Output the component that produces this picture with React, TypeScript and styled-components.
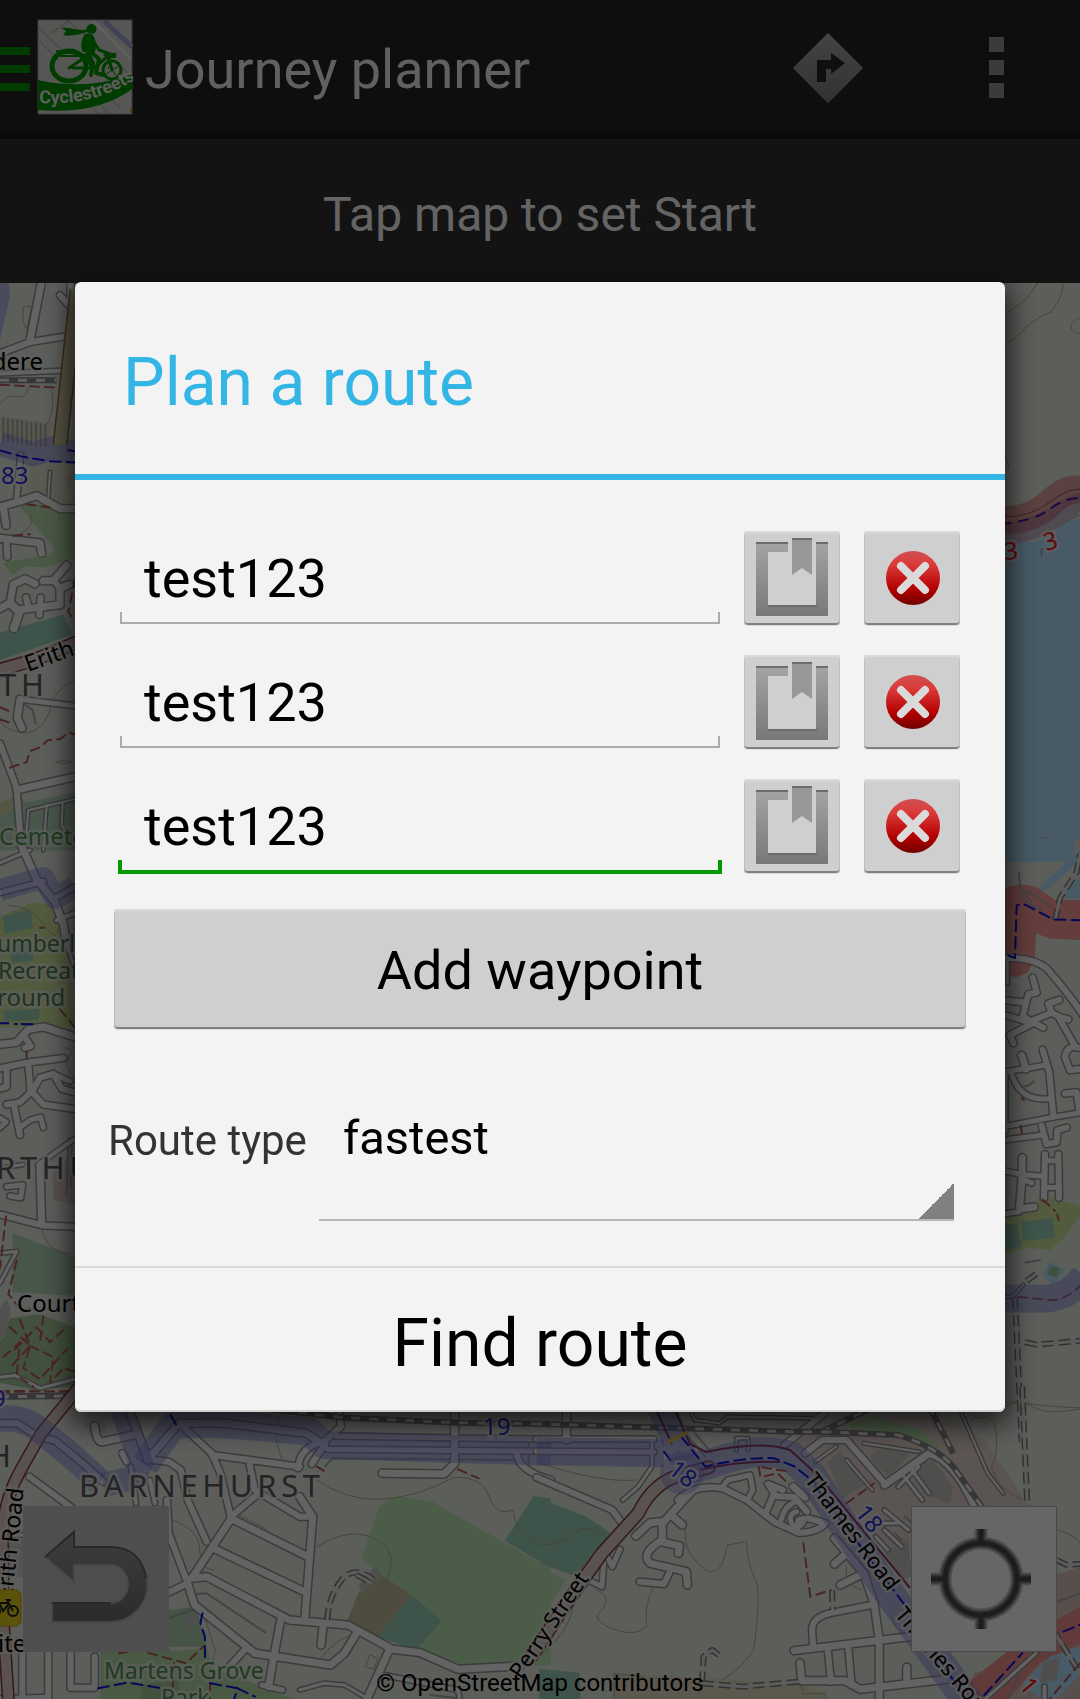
import React from "react";
import styled, { createGlobalStyle, css } from "styled-components";

const GlobalStyle = createGlobalStyle`
  *, *::before, *::after { box-sizing: border-box; }
  body {
    margin: 0;
    font-family: Roboto, "Noto Sans", sans-serif;
    background: #232323;
  }
  button, input, select { font: inherit; color: inherit; }
  h1, h2, p { margin: 0; font-weight: 400; }
`;

/* ---------- page ---------- */

const Page = styled.div`
  display: flex;
  flex-direction: column;
  min-height: 100vh;
`;

const ActionBar = styled.header`
  display: flex;
  align-items: center;
  height: 139px;
  background: #232323;
  border-bottom: 6px solid #1a1a1a;
  color: #f0f0f0;
`;

const BareButton = styled.button`
  display: flex;
  align-items: center;
  justify-content: center;
  padding: 0;
  border: 0;
  background: none;
`;

const DrawerButton = styled(BareButton)`
  flex-direction: column;
  align-items: stretch;
  gap: 10px;
  width: 30px;
  margin: 4px 7px 0 0;
`;

const DrawerLine = styled.span`
  height: 8px;
  background: #009600;
`;

const AppTitle = styled.h1`
  flex: 1;
  padding: 6px 0 0 12px;
  font-size: 54px;
  line-height: 64px;
  white-space: nowrap;
`;

const ActionButton = styled(BareButton)`
  width: 168px;
  height: 133px;
  padding-top: 2px;
`;

const Dots = styled.span`
  display: grid;
  gap: 8px;
`;

const Dot = styled.span`
  width: 15px;
  height: 15px;
  background: #939393;
`;

const Hint = styled.p`
  height: 144px;
  padding-top: 7px;
  background: #313131;
  color: #fbfbfb;
  font-size: 48px;
  line-height: 137px;
  text-align: center;
`;

/* ---------- map ---------- */

const MapPane = styled.main`
  position: relative;
  flex: 1;
  min-height: 600px;
  overflow: hidden;
  background: #e6eae2;
`;

const MapCanvas = styled.svg`
  position: absolute;
  inset: 0;
  width: 100%;
  height: 100%;
`;

const MapControls = styled.div`
  position: absolute;
  inset: auto 23px 47px;
  display: flex;
  justify-content: space-between;
`;

const MapButton = styled(BareButton)<{ $light?: boolean }>`
  width: 146px;
  height: 146px;
  background: ${(p) => (p.$light ? "#ffffff" : "#c3c3c3")};
  ${(p) => p.$light && css`box-shadow: inset 0 0 0 1px #b4b4b4;`}
`;

const Attribution = styled.p`
  position: absolute;
  inset: auto 0 0;
  color: #000;
  font-size: 24px;
  line-height: 32px;
  text-align: center;
`;

/* ---------- dialog ---------- */

const Scrim = styled.div`
  position: fixed;
  inset: 0;
  display: flex;
  align-items: center;
  justify-content: center;
  padding: 0 75px 6px;
  background: rgba(0, 0, 0, 0.6);
`;

const Dialog = styled.section`
  flex: 1;
  max-width: 1200px;
  border-radius: 6px;
  background: #f3f3f3;
  box-shadow: 0 8px 28px 4px rgba(0, 0, 0, 0.75), inset 0 -2px 0 #d0d0d0;
  color: #000;
`;

const DialogTitle = styled.h2`
  height: 198px;
  padding: 8px 48px 0;
  border-bottom: 6px solid #33b5e5;
  color: #33b5e5;
  font-size: 66px;
  line-height: 186px;
`;

const DialogBody = styled.div`
  padding: 50px 39px 45px;
`;

const Waypoints = styled.div`
  display: grid;
  gap: 28px;
  padding: 0 6px 0 4px;
`;

const Waypoint = styled.div`
  display: grid;
  grid-template-columns: 1fr 96px 96px;
  align-items: center;
  gap: 24px;
`;

const WaypointInput = styled.input<{ $active: boolean }>`
  --line: ${(p) => (p.$active ? "#009900" : "#ababab")};
  --weight: ${(p) => (p.$active ? "4px" : "2px")};
  --rise: ${(p) => (p.$active ? "14px" : "12px")};
  width: calc(100% + 2px);
  height: 96px;
  padding: ${(p) => (p.$active ? "2px 26px 0" : "4px 24px 0")};
  border: ${(p) => (p.$active ? "0" : "2px")} solid transparent;
  border-top-width: 0;
  border-radius: 0;
  outline: 0;
  background-color: transparent;
  background-image: linear-gradient(var(--line), var(--line)),
    linear-gradient(var(--line), var(--line)),
    linear-gradient(var(--line), var(--line));
  background-position: left bottom, right bottom, left bottom;
  background-size: var(--weight) var(--rise), var(--weight) var(--rise), 100% var(--weight);
  background-repeat: no-repeat;
  font-size: 54px;
`;

const greyButton = css`
  border: 0;
  border-radius: 4px;
  background: #cfcfcf;
  box-shadow: inset 0 2px 0 #dadada, inset 1px 0 0 #bcbcbc, inset -1px 0 0 #bcbcbc,
    inset 0 -2px 0 #808080, 0 1px 0 #dcdcdc;
`;

const WaypointButton = styled(BareButton)`
  ${greyButton}
  height: 94px;
`;

const AddButton = styled.button`
  ${greyButton}
  width: 100%;
  height: 120px;
  margin-top: 35px;
  padding: 4px 0 0;
  font-size: 54px;
`;

const RouteType = styled.div`
  display: flex;
  align-items: center;
  gap: 12px;
  margin: 28px 12px 0 -6px;
`;

const RouteLabel = styled.label`
  padding-top: 3px;
  color: #333;
  font-size: 42px;
  white-space: nowrap;
`;

const RouteSelect = styled.select`
  flex: 1;
  min-width: 0;
  height: 164px;
  padding: 0 24px;
  border: 0;
  border-bottom: 2px solid #b7b7b7;
  border-radius: 0;
  appearance: none;
  background: linear-gradient(135deg, transparent 50%, #808080 50%) right bottom / 36px 36px no-repeat;
  font-size: 47px;
`;

const FindButton = styled.button`
  display: block;
  width: 100%;
  height: 146px;
  padding: 8px 0 0;
  border: 0;
  border-top: 2px solid #d9d9d9;
  background: none;
  font-size: 66px;
`;

/* ---------- map drawing ---------- */

type Area = [fill: string, points: string];
type Line = [d: string, width: number];

interface Sheet {
  transform: string;
  areas: Area[];
  bands: Line[];
  rails: string[];
  roads: Line[];
  lanes: string[];
  mains: Line[];
  tracks: string[];
  cycle: string[];
  paths: string[];
  contours: string[];
}

const PARK = "#b9dfaa";
const PITCH = "#9bd0b8";
const GRASS = "#cfe39c";
const WOOD = "#a6cb98";
const WATER = "#b2e1ff";

const sheets: Sheet[] = [
  {
    transform: "translate(0 270) scale(.3333 .37)",
    areas: [
      ["#bcbcf0", "0,30 25,30 30,70 0,190"],
      ["#dedcc2", "0,395 155,415 145,480 0,455"],
      ["#e2e0cc", "80,520 225,520 225,640 80,600"],
      [PARK, "60,640 100,630 225,660 225,780 165,755"],
      [PARK, "10,790 150,770 165,755 225,780 130,805 75,800 35,825"],
      [PITCH, "0,980 190,932 218,985 0,1055"],
      ["#d6d6ac", "0,1440 60,1410 75,1440 0,1480"],
      ["#b4d6be", "0,1480 75,1440 225,1410 225,1568 0,1568"],
      ["#cacaca", "205,555 215,555 210,590 198,585"],
    ],
    bands: [["M0 470L100 498 170 478 225 498", 24]],
    rails: ["M0 298L170 298"],
    roads: [
      ["M125 30L90 190", 8], ["M0 225L90 195 205 178", 7], ["M212 30L212 100 180 68", 7],
      ["M0 280L185 272", 5], ["M62 500L50 620", 6], ["M0 640L60 625 110 610 180 645 225 645", 8],
      ["M10 640L18 690", 8], ["M0 725L120 738 125 765", 8], ["M20 740L22 775", 7],
      ["M0 915L30 900 40 850 75 835 105 848", 8], ["M30 900L58 925 42 968", 9],
      ["M58 918L180 905 180 860 208 850", 8], ["M78 885L85 910", 7], ["M122 885L118 932", 7],
      ["M130 840L160 840 200 798", 8], ["M160 838L182 862", 7], ["M60 1160L225 1178", 6],
      ["M60 1160L52 1210 66 1238", 8], ["M0 1280L50 1400 60 1520", 7], ["M50 1405L225 1370", 8],
      ["M75 1568L85 1460 225 1430", 3], ["M140 1445L130 1568", 3], ["M188 1440L185 1500 210 1540", 3],
      ["M150 545L145 615", 3],
    ],
    lanes: [
      "M10 400v60M24 402v60M38 404v60M52 406v60M66 408v60M80 410v60M94 412v60M108 414v60M122 416v60M136 418v56",
      "M70 1172L98 1190 107 1225",
    ],
    mains: [["M0 1080L100 1055 225 1008", 14]],
    tracks: [],
    cycle: ["M0 488L70 505 150 517 225 520", "M205 487L225 490"],
    paths: [
      "M0 310L175 318", "M30 1345L80 1330 90 1300 120 1290 145 1270 180 1268 205 1250 225 1255",
      "M0 1182L35 1195", "M0 1215L35 1225", "M225 835L205 925 222 945", "M40 718L90 714", "M80 633L150 642",
    ],
    contours: [
      "M70 100L95 98 80 160 70 140Z", "M0 362Q20 335 50 342T85 318", "M155 325Q170 390 130 430",
      "M225 1110Q160 1130 150 1190Q120 1260 60 1250T0 1210", "M168 1330q20-8 45 0q-20 10-45 0",
      "M0 740Q120 700 90 660",
    ],
  },
  {
    transform: "translate(0 850) scale(.3333 .37)",
    areas: [
      [GRASS, "0,180 100,140 165,150 215,330 225,480 0,480"],
      [PITCH, "8,180 92,160 98,210 15,228"],
      [PITCH, "30,262 100,250 100,300 35,305"],
      [PITCH, "12,435 120,430 115,460 12,462"],
      ["#dcc8c4", "160,860 225,820 225,960 160,945"],
      ["#b4d4b6", "38,1035 225,1100 225,1205 38,1195"],
      [WOOD, "30,1265 120,1255 225,1290 225,1450 110,1460 0,1440 0,1330"],
      ["#c8c8c8", "0,1240 20,1215 32,1240 15,1320 0,1320"],
    ],
    bands: [["M0 108L130 75 165 130 225 100", 22]],
    rails: ["M0 1477L225 1473"],
    roads: [
      ["M65 -10L110 80 165 140 190 200 200 250", 8], ["M0 115L130 85", 6], ["M165 130L225 100", 6],
      ["M0 35L90 0", 4], ["M0 525L50 520 85 485 130 478 225 505", 8], ["M70 500L92 530 75 535", 7],
      ["M0 590L80 575 190 562", 7], ["M20 588L20 640 0 645", 7], ["M85 580L92 655 60 682 20 688", 7],
      ["M42 690L60 770", 7], ["M60 750L90 730 122 722 130 750", 6], ["M92 650L130 688 225 700", 7],
      ["M95 655L120 615 160 605 185 645 225 655", 7], ["M160 605L210 625", 6], ["M0 725L18 735 0 750", 6],
      ["M225 780L115 850", 5], ["M120 855L125 1010", 8], ["M0 985L130 1015 225 1018", 7],
      ["M20 910L68 905 62 940 30 935", 6], ["M70 850L0 860", 4], ["M0 1090L50 1085 0 1170", 4],
      ["M0 1425L45 1420 120 1455 225 1430", 4], ["M170 190L225 170", 5], ["M190 230L225 320", 4],
    ],
    lanes: ["M205 780L200 930", "M215 790L212 910"],
    mains: [],
    tracks: [],
    cycle: ["M0 468h25", "M45 470h6", "M65 470L102 471"],
    paths: [
      "M18 990L0 1130", "M50 1110L25 1200 60 1240 225 1240",
      "M30 1290L90 1340 70 1400 120 1430 200 1350", "M45 1350L110 1290 150 1330 200 1290",
      "M10 1370L60 1330 50 1420 100 1450", "M90 1340L160 1370 150 1440 190 1400 225 1410",
      "M130 1260L120 1330", "M180 430L225 480", "M80 545v20", "M120 210h12",
      "M0 1465L225 1462", "M60 1270L90 1340 30 1400",
    ],
    contours: ["M125 1020Q140 1095 225 1090", "M25 150Q90 150 130 200T175 215", "M195 535L215 540 200 580 225 620"],
  },
  {
    transform: "translate(960 270) scale(.3333 .37)",
    areas: [
      [WATER, "100,738 225,735 280,712 320,680 360,672 360,1600 100,1600"],
      ["#e0e0dc", "342,1550 360,1530 360,1600 342,1590"],
    ],
    bands: [],
    rails: [],
    roads: [],
    lanes: ["M245 755v15"],
    mains: [],
    tracks: [],
    cycle: [],
    paths: [],
    contours: [
      "M232 35Q200 90 135 118", "M310 35Q310 70 275 112Q220 130 170 180L135 202",
      "M360 130Q335 135 332 155Q345 175 360 172", "M135 500L146 530 135 540", "M220 1568L215 1545 268 1532",
    ],
  },
  {
    transform: "translate(960 850) scale(.3333 .37)",
    areas: [
      [WATER, "100,-30 310,-30 320,15 240,25 100,8"],
      [WATER, "360,0 310,40 240,100 240,118 285,90 340,45 360,20"],
      [WATER, "315,110 360,75 360,132 320,132"],
      ["#fa9b96", "120,105 180,92 230,100 285,135 360,135 360,243 270,240 228,225 225,290 205,330 170,344 120,335"],
      [GRASS, "120,1005 230,960 235,935 300,945 360,962 360,990 310,1050 270,1082 200,1075 120,1105"],
      [PITCH, "183,1005 278,995 285,1048 190,1057"],
      [PITCH, "120,1018 170,1008 185,1070 120,1088"],
      [WATER, "268,1112 315,1135 280,1175 248,1150"],
      ["#9ccb9a", "270,1125 300,1130 290,1155 262,1148"],
      ["#e4cfcc", "120,870 150,870 145,975 120,975"],
    ],
    bands: [["M100 1212L250 1213Q330 1210 375 1150", 28]],
    rails: [],
    roads: [
      ["M140 292Q220 290 260 320Q330 390 375 455", 7], ["M218 345L230 385 205 390 188 450 250 480", 7],
      ["M120 405L195 412", 7], ["M120 442L195 462", 7], ["M215 470L150 500 160 522", 7],
      ["M220 460L275 440 265 415 298 405", 7], ["M275 440L300 452 325 458", 7], ["M298 455L345 530", 7],
      ["M360 535Q320 525 315 560L330 595 375 590", 7], ["M185 555L198 592", 8], ["M120 602L255 582", 6],
      ["M248 540L268 600 280 720", 7], ["M155 605Q180 680 265 672", 6], ["M120 750L280 722 375 708", 6],
      ["M315 658L350 655 358 705", 7], ["M120 785L250 770", 6], ["M245 745L260 795 290 790 292 758 320 750", 7],
      ["M187 832L185 900 178 970 222 965", 8], ["M120 865L190 878 250 882", 6], ["M190 890L215 900", 6],
      ["M255 822L252 940", 7], ["M295 822L297 940", 7], ["M255 840h40", 6], ["M255 912h42", 6],
      ["M120 985L178 978", 6], ["M138 600V760", 4], ["M120 1210L160 1205 190 1175", 3],
      ["M142 290V360", 4],
    ],
    lanes: [
      "M177 60L180 105 215 140", "M190 110Q230 120 265 150M185 125Q220 160 245 160", "M185 640Q205 640 222 625",
      "M197 1115L240 1108",
    ],
    mains: [],
    tracks: ["M165 1210L185 1600", "M195 1330L230 1337 375 1325", "M285 190L300 130 350 60 360 10", "M200 1165L230 1145"],
    cycle: ["M145 285L165 292 170 150 190 145 280 188 375 190"],
    paths: ["M175 1208L280 1217Q330 1210 375 1165", "M248 945L285 975", "M292 985L296 1000", "M182 745L186 765", "M185 670L192 675"],
    contours: ["M100 1500Q180 1480 220 1505T375 1508"],
  },
  {
    transform: "translate(0 1390) scale(.3444 .3333)",
    areas: [
      ["#bce6b4", "1100,350 1150,318 1255,335 1600,538 1600,826 1330,828 1210,780 1283,692 1195,615 1050,508"],
      ["#c3be9b", "1110,555 1195,615 1095,740 1008,692 1040,610"],
      [PITCH, "1195,615 1283,692 1210,780 1095,740"],
      [PITCH, "1550,318 1600,325 1600,535 1465,452"],
      ["#b0d2b2", "490,660 570,650 600,770 490,770"],
      [PARK, "292,787 560,780 600,770 615,830 760,890 850,927 292,940"],
      [WOOD, "410,885 520,870 520,940 410,940"],
      ["#c6c6c0", "530,690 560,670 580,690 550,720"],
      ["#c6c6c0", "1075,545 1090,530 1110,555 1055,610 1040,590"],
      ["#cfcfca", "0,440 70,440 70,560 0,560"],
      ["#d6d6d0", "245,90 300,80 310,130 260,140"],
    ],
    bands: [
      ["M-10 88Q60 75 115 120L200 190 290 275", 26],
      ["M355 60L410 220 385 265 300 285", 24],
      ["M420 225L500 110Q560 90 900 125L940 165 1600 185", 28],
    ],
    rails: ["M0 20L215 18", "M760 55L1000 83 1330 98 1600 102"],
    roads: [
      ["M0 100L50 100 110 140 160 152 240 220 300 275", 7], ["M85 260L230 370", 7], ["M375 60L430 210", 8],
      ["M430 208L520 100 640 98 890 130 930 158", 8], ["M520 100L615 190 640 250 670 380", 7],
      ["M615 195L870 230", 7], ["M725 225L740 300 870 380 910 380", 7], ["M865 235Q870 170 940 155L990 110 985 60", 7],
      ["M945 160L905 222", 7], ["M975 138L1600 148", 6], ["M950 178L1600 184", 6],
      ["M1320 60L1320 220 1290 252 1110 250", 8], ["M1500 185Q1500 240 1600 270", 7],
      ["M275 108Q280 160 300 155L400 132", 8], ["M355 190L368 215", 7], ["M425 208L490 215 525 240 545 330 600 455", 7],
      ["M870 320L908 380 885 690", 8], ["M670 380L740 320", 7], ["M670 385L890 498", 8], ["M675 380L560 560", 8],
      ["M620 475L890 608", 8], ["M555 565L600 560 840 690 1010 705 1140 778 1220 788 1330 838 1510 828", 8],
      ["M480 612L545 580 490 430 485 330", 7], ["M545 580L565 645 740 790 960 825 1000 790 1035 730", 8],
      ["M815 690L795 800 780 890", 8], ["M938 710L932 765", 8], ["M710 780L670 825", 7], ["M65 780V940", 7],
      ["M140 790V940", 7], ["M205 780V893H275V800", 7], ["M1130 780L1060 940", 8], ["M0 925L140 920", 5],
      ["M760 885L820 900", 6], ["M435 270L450 340", 5], ["M380 230L395 340", 5], ["M1115 855L1330 900 1335 927", 5],
      ["M870 900L940 880 1000 885 1070 927", 4], ["M0 435H70", 4],
    ],
    lanes: ["M565 612L600 610 770 727", "M490 685L560 660", "M1250 915L1330 925", "M945 228L965 205 1500 210", "M1535 150V240"],
    mains: [["M235 -15L120 130 60 240Q0 350 8 480L10 700 25 940", 13]],
    tracks: ["M950 690Q955 610 1000 560Q1040 530 1085 570", "M1035 555L1080 580"],
    cycle: [
      "M495 75L515 110", "M588 670L582 700 595 740 595 810", "M285 895L370 878 470 895",
      "M610 880L690 895 680 927", "M690 895L740 920",
    ],
    paths: ["M1330 238L1390 265", "M345 790L400 780 540 820 590 770", "M920 230L940 242", "M505 820L500 927", "M610 880V927", "M0 3L100 3"],
    contours: [
      "M920 270Q1000 330 1100 328T1320 262Q1400 260 1420 320T1490 360Q1500 450 1568 460",
      "M920 470Q1000 420 1060 435Q1140 460 1135 520Q1130 570 1110 600", "M920 830Q950 760 1020 735",
      "M500 390Q580 420 580 480T620 540", "M590 670L625 780 610 840", "M820 70Q780 110 820 210", "M685 370L770 415",
      "M1075 795L1098 805 1085 838 1062 830Z",
    ],
  },
  {
    transform: "translate(540 1390) scale(.3444 .3333)",
    areas: [
      [PITCH, "-2,325 135,380 205,430 105,560 -2,518"],
      ["#bce6b4", "-2,530 75,570 -2,690"],
      ["#e2d2cc", "740,160 900,60 1150,60 1290,150 1420,350 1080,350 1070,580 800,210"],
      ["#c4c4be", "835,215 870,185 950,280 880,325"],
      ["#c4c4be", "955,200 1010,160 1075,195 1010,260"],
      ["#c4c4be", "1000,490 1070,440 1080,560 1050,570"],
      ["#c4c4be", "1090,225 1140,210 1200,290 1190,340 1110,310"],
      [PARK, "890,105 980,75 1030,100 1100,115 1155,168 1040,135 910,120"],
      [PITCH, "-2,837 115,848 118,940 -2,940"],
      ["#e3dcc2", "215,850 755,880 830,910 830,940 215,940"],
      ["#dcc2bf", "1480,560 1600,520 1600,940 1240,940 1260,850 1490,780"],
      ["#f2938e", "1240,880 1400,750 1600,630 1600,745 1450,820 1350,940 1240,940"],
      [WATER, "1400,880 1480,800 1600,760 1600,820 1500,927 1470,940 1420,900"],
      ["#c4c4be", "1460,820 1510,800 1500,870 1450,880"],
    ],
    bands: [
      ["M-10 184L360 190", 28], ["M350 50L420 210", 28],
      ["M400 245L500 220Q640 165 730 200L790 260 1000 590 1250 945", 30],
    ],
    rails: ["M-20 101L730 125 820 125 950 60", "M820 125L1040 135Q1150 170 1200 230L1290 360", "M1130 50L1200 190"],
    roads: [
      ["M-10 147L330 147", 6], ["M-10 184L330 186", 6], ["M77 60V150", 8], ["M325 150V230L285 290 240 330", 4],
      ["M-10 262L210 360 235 395", 7], ["M710 165L825 70", 7], ["M770 190L820 150 890 150 1000 280", 7],
      ["M1000 285L1130 190Q1200 210 1260 345", 8], ["M440 305L355 400 355 450Q290 490 320 520L425 545 428 585", 8],
      ["M350 455L405 468 402 490", 8], ["M375 550L360 582 290 575", 7], ["M350 395L320 398 278 438", 8],
      ["M380 375L413 405", 8], ["M232 478L210 530 190 490", 6], ["M185 520L180 590 140 570", 6],
      ["M400 330Q450 280 530 295L600 330 680 395 750 428Q800 430 830 400L780 385", 7],
      ["M530 290L545 270 610 255 618 300 605 325", 6], ["M655 370L680 310 662 282 705 300", 7],
      ["M680 318L740 322 775 365", 7], ["M700 390Q710 345 745 335", 6], ["M735 290L770 322", 8],
      ["M745 365a20 22 0 1 0 22 20l-18 5v25", 6],
      ["M855 445L940 550 970 640 985 750 985 940", 8], ["M890 490L855 522", 8], ["M930 555L872 585", 8],
      ["M962 645L850 668Q790 680 790 720L793 765", 7], ["M738 782L1090 738", 8], ["M835 775L845 875", 7],
      ["M895 770L905 885", 7], ["M755 820L760 872 885 872 930 898 1180 868", 8], ["M1065 832V878", 8],
      ["M1050 250L1110 330", 4], ["M1080 240L1130 310", 4], ["M1040 290L1100 230", 4],
      ["M975 440L1010 480M1000 420L1050 470M960 400L1040 400M1000 360L1070 420", 4],
      ["M890 210L965 300", 3], ["M1220 60L1300 250 1345 310", 3], ["M450 90L520 100 545 80 790 85", 3],
      ["M440 70L450 90", 3], ["M800 215L860 170", 3], ["M940 160L1100 185", 3], ["M570 180V145H605V180", 3],
      ["M1290 930L1440 790", 4], ["M1465 890V940", 5],
    ],
    lanes: [
      "M1490 640L1568 610", "M1400 830L1360 927", "M1010 440l20 20M1030 430l20 20M1060 380l20 20", "M430 140L480 200M450 130L500 190",
    ],
    mains: [["M490 232L410 255Q330 275 285 370L180 490 90 620 -25 800", 14]],
    tracks: [
      "M1400 -10L1415 350", "M470 880L475 800 500 780 525 800", "M470 880L590 890 750 875", "M848 600L850 660",
      "M1500 510L1530 525 1600 520", "M1490 720L1568 850",
    ],
    cycle: [
      "M410 140L480 230Q600 200 680 205L740 230 800 280", "M800 290L1070 660", "M1080 690L1250 945", "M360 185L385 220",
      "M1290 915L1400 790", "M1520 725L1600 690",
    ],
    paths: ["M765 460L785 620 845 600", "M890 340L970 280", "M635 230L640 262 690 250 715 275", "M645 232L725 245", "M1568 820L1480 927"],
    contours: [
      "M0 465Q60 465 100 430T190 440",
      "M425 390Q410 480 460 520Q500 570 530 520L545 465 600 455Q600 520 630 580Q640 640 620 780Q590 830 530 870",
      "M165 600Q210 620 180 660Q140 690 220 720Q280 740 310 710Q300 650 330 590", "M0 795Q80 740 100 640",
      "M1250 90Q1320 60 1325 130T1310 230Q1330 300 1400 330", "M215 927V850L300 860", "M0 220Q180 280 280 270",
      "M755 880L765 912 830 910V927", "M890 530Q880 580 930 600", "M1500 420Q1550 430 1568 460",
      "M1350 50Q1380 30 1420 40T1600 55", "M1020 680Q1040 740 1080 740",
    ],
  },
];

const Label = styled.text<{ $size?: number }>`
  font-family: "Noto Sans", "Open Sans", sans-serif;
  font-size: ${(p) => p.$size ?? 24}px;
  paint-order: stroke;
  stroke: rgba(236, 238, 232, 0.7);
  stroke-width: 5px;
  stroke-linejoin: round;
`;

const Town = styled(Label)`
  letter-spacing: 0.15em;
  fill: #5a5a5a;
`;

const SheetStroke = styled.g`
  fill: none;
  stroke-linecap: round;
  stroke-linejoin: round;
  path { vector-effect: non-scaling-stroke; }
`;

function MapSheet({ sheet }: { sheet: Sheet }) {
  return (
    <g transform={sheet.transform}>
      {sheet.areas.map(([fill, points]) => <polygon key={points} fill={fill} points={points} />)}
      <SheetStroke>
        {sheet.contours.map((d) => <path key={d} d={d} stroke="#b3ac92" strokeWidth={1} />)}
        {sheet.lanes.map((d) => <path key={d} d={d} stroke="#a8a8a8" strokeWidth={2} />)}
        {sheet.roads.map(([d, w]) => <path key={d} d={d} stroke="#949494" strokeWidth={w + 2} />)}
        {sheet.roads.map(([d, w]) => <path key={d} d={d} stroke="#f8f8f8" strokeWidth={w - 1} />)}
        {sheet.rails.map((d) => (
          <g key={d} strokeLinecap="butt">
            <path d={d} stroke="#888" strokeWidth={6} />
            <path d={d} stroke="#eee" strokeWidth={3} strokeDasharray="9 9" />
          </g>
        ))}
        {sheet.tracks.map((d) => (
          <g key={d} strokeLinecap="butt">
            <path d={d} stroke="#7c7c7c" strokeWidth={6} strokeDasharray="12 5" />
            <path d={d} stroke="#e4e6e0" strokeWidth={3} />
          </g>
        ))}
        {sheet.mains.map(([d, w]) => (
          <g key={d}>
            <path d={d} stroke="#8a3a3c" strokeWidth={w} />
            <path d={d} stroke="#e0ccc8" strokeWidth={w - 3} />
          </g>
        ))}
        {sheet.paths.map((d) => <path key={d} d={d} stroke="#b85a55" strokeWidth={2} strokeDasharray="9 6" />)}
        {sheet.bands.map(([d, w]) => (
          <path key={d} d={d} stroke="#7878dc" strokeWidth={w} strokeOpacity={0.42} strokeLinecap="butt" />
        ))}
        {sheet.cycle.map((d) => <path key={d} d={d} stroke="#1010e0" strokeWidth={2} strokeDasharray="11 6" />)}
      </SheetStroke>
    </g>
  );
}

function StreetMap() {
  return (
    <MapCanvas viewBox="0 283 1080 1416" preserveAspectRatio="xMidYMid slice" role="img" aria-label="Street map">
      {sheets.map((sheet) => <MapSheet key={sheet.transform} sheet={sheet} />)}

      {/* B-road on the west side */}
      <path d="M77 290L60 445" stroke="#8f6a3c" strokeWidth="15" />
      <path d="M77 290L60 445" stroke="#d6cfa6" strokeWidth="12" />

      {/* riverside route */}
      <g fill="none">
        <path d="M1000 520Q1030 522 1050 503T1085 492" stroke="#e05a5a" strokeOpacity=".5" strokeWidth="28" />
        <path d="M1000 535Q1030 533 1055 517T1085 505" stroke="#9060a0" strokeOpacity=".35" strokeWidth="22" />
        <path d="M1000 517Q1030 518 1050 502T1085 490" stroke="#a05050" strokeWidth="1" />
        <path d="M1000 524Q1035 521 1050 509T1085 498" stroke="#3a10b8" strokeWidth="2" strokeDasharray="11 7" />
      </g>

      {/* dual carriageway edges along Thames Road */}
      <g fill="none" stroke="#8a3a70" strokeWidth="2">
        <path d="M657 1412L672 1444M676 1412L690 1444 706 1452Q760 1440 790 1450L812 1470 830 1490 910 1588" />
        <path d="M700 1470Q740 1460 780 1462" />
        <path d="M668 1442L688 1432" stroke="#e0c860" strokeWidth="4" />
      </g>
      <circle cx="682" cy="1473" r="22" fill="#7878dc" fillOpacity=".35" />

      <Label x="43" y="370" textAnchor="end">dere</Label>
      <Label x="1" y="484" fill="#2f2fe0">83</Label>
      <Label transform="translate(28 672) rotate(-20)" $size={23}>Erith</Label>
      <Town x="-1" y="696" $size={31}>TH</Town>
      <Label x="-1" y="845" fill="#4f9550">Cemete</Label>
      <Label x="-3" y="952" fill="#4f7f50" $size={23}>umberla</Label>
      <Label x="-2" y="979" fill="#4f7f50" $size={23}>Recreat</Label>
      <Label x="-3" y="1006" fill="#4f7f50">round</Label>
      <Town x="-4" y="1179" $size={31}>RTHU</Town>
      <Label x="17" y="1312">Court</Label>
      <Label x="-8" y="1407" fill="#2f2fe0">9</Label>
      <Town x="-12" y="1467" $size={31}>H</Town>
      <Town x="79" y="1497" $size={31}>BARNEHURST</Town>
      <Label transform="translate(12 1600) rotate(-84)" $size={23}>Erith Road</Label>
      <Label x="-2" y="1652">ite</Label>
      <Label x="483" y="1435" fill="#2f2fe0">19</Label>
      <Label x="104" y="1679" fill="#4f9550" $size={23}>Martens Grove</Label>
      <Label x="161" y="1706" fill="#4f9550" $size={23}>Park</Label>
      <Label transform="translate(667 1472) rotate(38)" fill="#2f2fe0">18</Label>
      <Label transform="translate(854 1513) rotate(52)" fill="#2f2fe0">18</Label>
      <Label transform="translate(804 1480) rotate(53)" $size={22}>Thames Road</Label>
      <Label transform="translate(894 1615) rotate(50)" $size={22}>Thames Road</Label>
      <Label transform="translate(521 1680) rotate(-56)" $size={22}>Perry Street</Label>
      <Label transform="translate(1005 560) rotate(-6)" fill="#f01010">3</Label>
      <Label transform="translate(1046 551) rotate(-16)" fill="#f01010">3</Label>
      <Label transform="translate(1018 1686) rotate(50)" fill="#f01010">1</Label>

      {/* cycle parking */}
      <rect x="-20" y="1590" width="41" height="36" rx="6" fill="#ded020" stroke="#d0a010" />
      <g fill="none" stroke="#222" strokeWidth="2">
        <circle cx="13" cy="1611" r="5" />
        <circle cx="-5" cy="1611" r="5" />
        <path d="M13 1611L7 1600H11M8 1603H-1L3 1611 9 1604" />
      </g>
    </MapCanvas>
  );
}

/* ---------- icons ---------- */

function Logo() {
  return (
    <svg width="96" height="96" viewBox="0 0 96 96" role="img" aria-label="CycleStreets">
      <defs>
        <path id="bannerLine" d="M2 84Q54 88 99 60" />
      </defs>
      <rect x="1" y="1" width="94" height="94" fill="#d8d8d2" stroke="#9a9a96" />
      <g fill="none" stroke="#a3a29f">
        <path d="M1 8L30 36M1 20L22 42M30 1L95 58M14 14L34 1M62 95L50 84M72 95L60 82M84 90L70 76" />
        <path d="M67 2L95 28" stroke="#a0a6d8" strokeWidth="5" />
        <path d="M56 2L94 40" stroke="#efefec" strokeWidth="3" />
      </g>
      <g fill="none" stroke="#009400" strokeLinecap="round" strokeLinejoin="round">
        <ellipse cx="32" cy="47" rx="17" ry="15" strokeWidth="5" />
        <circle cx="75" cy="51" r="9" strokeWidth="3" />
        <path d="M20 32L48 36M20 32L24 37H46" strokeWidth="2" />
        <path d="M32 49L50 37L57 49H36M57 49L70 38M48 36L56 50" strokeWidth="3" />
        <path d="M75 51L70 34M68 36L78 37" strokeWidth="3" />
        <path d="M55 20L62 31 76 36" strokeWidth="3" />
        <path d="M52 31L62 40 59 54 66 56M50 32L56 44 54 56" strokeWidth="4" />
        <path d="M71 50L74 43M75 51L82 47M75 51L80 58M75 51L68 56" strokeWidth="1" />
      </g>
      <g fill="#009400">
        <path d="M55 5a5 5 0 1 1-1 10a5 5 0 0 1 1-10zM48 15C44 20 43 28 46 33H58C60 26 59 19 54 14z" />
        <path d="M51 10C42 13 34 8 24 9L29 12 26 16C34 18 42 15 51 13z" />
        <path d="M71 34h8v5h-8z" />
        <path d="M1 61Q50 72 95 55V70Q60 96 1 91z" />
      </g>
      <text fill="#e8eae4" fontFamily="Roboto, sans-serif" fontSize="18" fontWeight="700">
        <textPath href="#bannerLine">Cyclestreets</textPath>
      </text>
      <path d="M93 90l2-3v8h-2z" fill="#d8a040" />
    </svg>
  );
}

function DirectionsIcon() {
  return (
    <svg width="72" height="74" viewBox="0 0 72 74" aria-hidden="true">
      <defs>
        <linearGradient id="sign" x2="0" y2="1">
          <stop offset="0" stopColor="#aaaaaa" />
          <stop offset="1" stopColor="#7c7c7c" />
        </linearGradient>
      </defs>
      <path d="M36 2L71 37 36 72 1 37z" fill="url(#sign)" stroke="#6e6e6e" />
      <path d="M25 51V29H39V22L53 32 39 43V38H34V51z" fill="#262626" />
    </svg>
  );
}

function UndoIcon() {
  return (
    <svg width="146" height="146" viewBox="0 0 146 146" aria-hidden="true">
      <defs>
        <linearGradient id="undo" x2="0" y2="1">
          <stop offset="0" stopColor="#9a9a9a" />
          <stop offset="1" stopColor="#6c6c6c" />
        </linearGradient>
      </defs>
      <path
        d="M22 51L51 26V41H88A36 37 0 0 1 88 116H29V97H88A17 19 0 0 0 88 59H51V76z"
        fill="url(#undo)"
        stroke="#b2b2b2"
        strokeWidth="2"
      />
      <path d="M22 51L51 26V41H88Q118 42 123 72M29 97H88" fill="none" stroke="#646464" strokeWidth="2" />
    </svg>
  );
}

function LocateIcon() {
  return (
    <svg width="146" height="146" viewBox="0 0 146 146" aria-hidden="true">
      <g fill="none">
        {[
          ["#c4c4c4", 13],
          ["#808080", 9],
          ["#4a4a4a", 5],
        ].map(([color, width]) => (
          <g key={color} stroke={String(color)} strokeWidth={Number(width)}>
            <circle cx="70" cy="73" r="36" />
            <path d="M70 23V37M70 109V123M20 73H34M106 73H120" />
          </g>
        ))}
      </g>
    </svg>
  );
}

function BookmarkIcon() {
  return (
    <svg width="72" height="82" viewBox="0 0 72 82" aria-hidden="true">
      <defs>
        <linearGradient id="book" x2="0" y2="1">
          <stop offset="0" stopColor="#a4a4a4" />
          <stop offset="1" stopColor="#787878" />
        </linearGradient>
      </defs>
      <path d="M0 5H32V15H12V69H60V5H72V79H0z" fill="url(#book)" />
      <path d="M0 6H32M60 6H72M12 69H61" stroke="#6c6c6c" strokeWidth="2" />
      <path d="M36 1H56V38L46 31 36 38z" fill="#979797" />
      <path d="M36 2H56" stroke="#6c6c6c" strokeWidth="2" />
    </svg>
  );
}

function RemoveIcon() {
  return (
    <svg width="56" height="56" viewBox="0 0 56 56" aria-hidden="true">
      <defs>
        <linearGradient id="remove" x2="0" y2="1">
          <stop offset="0" stopColor="#d05050" />
          <stop offset=".25" stopColor="#dc3a3a" />
          <stop offset=".7" stopColor="#b40000" />
          <stop offset="1" stopColor="#700000" />
        </linearGradient>
      </defs>
      <circle cx="29" cy="28" r="27" fill="url(#remove)" />
      <path d="M17 16L41 40M41 16L17 40" stroke="#dadada" strokeWidth="8" strokeLinecap="round" />
    </svg>
  );
}

/* ---------- app ---------- */

const waypoints = [
  { id: 1, name: "test123", active: false },
  { id: 2, name: "test123", active: false },
  { id: 3, name: "test123", active: true },
];

export default function App() {
  return (
    <>
      <GlobalStyle />
      <Page>
        <ActionBar>
          <DrawerButton type="button" aria-label="Open menu">
            <DrawerLine />
            <DrawerLine />
            <DrawerLine />
          </DrawerButton>
          <Logo />
          <AppTitle>Journey planner</AppTitle>
          <ActionButton type="button" aria-label="Directions">
            <DirectionsIcon />
          </ActionButton>
          <ActionButton type="button" aria-label="More options">
            <Dots>
              <Dot />
              <Dot />
              <Dot />
            </Dots>
          </ActionButton>
        </ActionBar>
        <Hint>Tap map to set Start</Hint>
        <MapPane>
          <StreetMap />
          <MapControls>
            <MapButton type="button" aria-label="Undo">
              <UndoIcon />
            </MapButton>
            <MapButton type="button" aria-label="My location" $light>
              <LocateIcon />
            </MapButton>
          </MapControls>
          <Attribution>© OpenStreetMap contributors</Attribution>
        </MapPane>
      </Page>

      <Scrim>
        <Dialog role="dialog" aria-labelledby="plan-title">
          <DialogTitle id="plan-title">Plan a route</DialogTitle>
          <DialogBody>
            <Waypoints>
              {waypoints.map((point) => (
                <Waypoint key={point.id}>
                  <WaypointInput
                    type="text"
                    aria-label={`Waypoint ${point.id}`}
                    defaultValue={point.name}
                    $active={point.active}
                  />
                  <WaypointButton type="button" aria-label={`Choose place for waypoint ${point.id}`}>
                    <BookmarkIcon />
                  </WaypointButton>
                  <WaypointButton type="button" aria-label={`Remove waypoint ${point.id}`}>
                    <RemoveIcon />
                  </WaypointButton>
                </Waypoint>
              ))}
            </Waypoints>
            <AddButton type="button">Add waypoint</AddButton>
            <RouteType>
              <RouteLabel htmlFor="route-type">Route type</RouteLabel>
              <RouteSelect id="route-type" defaultValue="fastest">
                <option value="fastest">fastest</option>
              </RouteSelect>
            </RouteType>
          </DialogBody>
          <FindButton type="button">Find route</FindButton>
        </Dialog>
      </Scrim>
    </>
  );
}
